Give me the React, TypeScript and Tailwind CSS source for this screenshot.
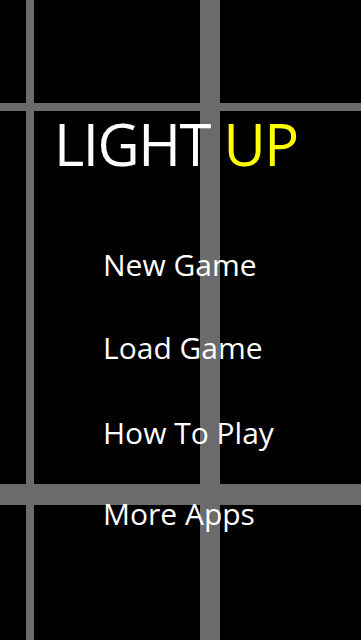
import React from "react";

function GridBackground() {
  return (
    <svg
      className="absolute inset-0 h-full w-full"
      width="361"
      height="640"
      viewBox="0 0 361 640"
      preserveAspectRatio="none"
      aria-hidden="true"
    >
      <rect x="0" y="0" width="361" height="640" fill="#000000" />
      <rect x="26" y="0" width="8" height="640" fill="#6b6b6b" />
      <rect x="200" y="0" width="20" height="640" fill="#6b6b6b" />
      <rect x="0" y="103" width="361" height="8" fill="#6b6b6b" />
      <rect x="0" y="484" width="361" height="21" fill="#6b6b6b" />
    </svg>
  );
}

export default function App() {
  const font = { fontFamily: '"Open Sans", "Liberation Sans", sans-serif' };
  return (
    <div className="relative h-[640px] w-[361px] overflow-hidden bg-black" style={font}>
      <GridBackground />
      <div className="relative flex flex-col">
        <h1 className="mt-[115px] pl-[54px] text-[58px] leading-none font-normal tracking-[-1.5px] text-white">
          LIGHT <span className="text-[#ffff00]">UP</span>
        </h1>
        <nav className="flex flex-col pl-[103px] text-[30px] leading-none text-white">
          <button className="mt-[77px] text-left">New Game</button>
          <button className="mt-[53px] text-left">Load Game</button>
          <button className="mt-[55px] text-left">How To Play</button>
          <button className="mt-[51px] text-left">More Apps</button>
        </nav>
      </div>
    </div>
  );
}
